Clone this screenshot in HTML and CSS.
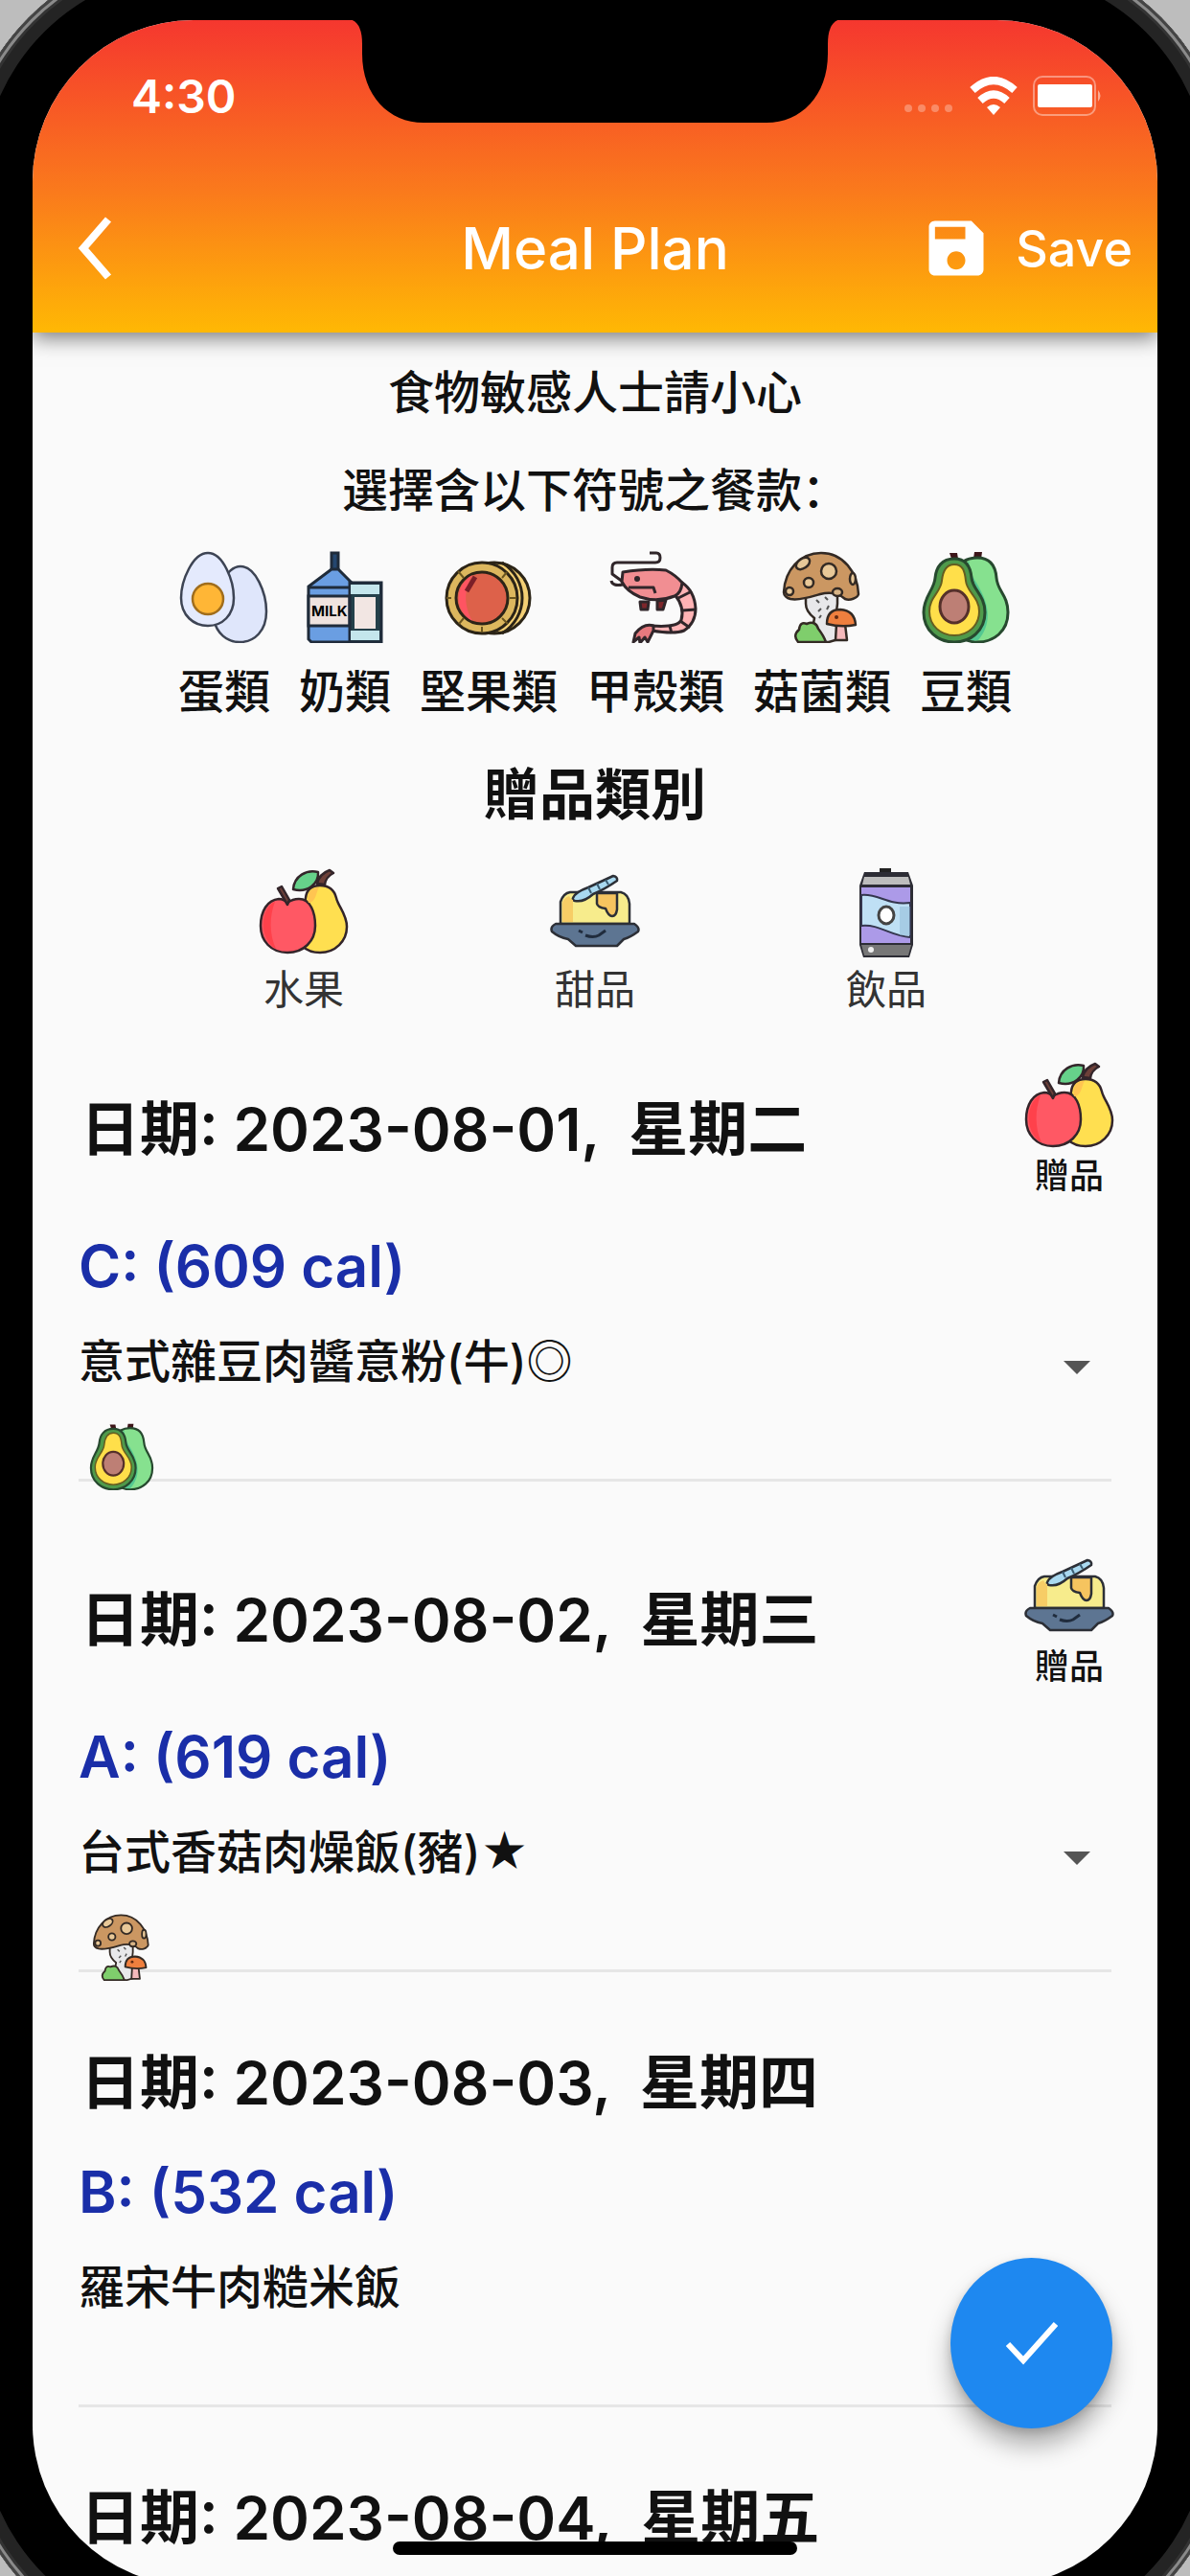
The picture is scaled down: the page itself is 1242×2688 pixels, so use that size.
FILE: index.html
```html
<!DOCTYPE html>
<html lang="zh-Hans">
<head>
    <meta charset="UTF-8">
    <meta name="viewport" content="width=device-width, initial-scale=1.0">
    <title>Meal Plan</title>
    <link rel="stylesheet" href="styles.css">
</head>
<body>

<!-- Food icons, reused with <use> below -->
<svg class="sprite" aria-hidden="true">
    <symbol id="egg" viewBox="0 0 96 96">
        <g stroke="#3d4454" stroke-width="2.5">
            <path fill="#dfe6fb" d="M65 16c16 0 27 28 27 47 0 20-12 32-28 32-13 0-24-9-27-24C36 45 50 16 65 16z"/>
            <path fill="#e4eafd" d="M31 2c16 0 27 29 27 47 0 18-12 29-27 29S3 67 3 49C3 31 15 2 31 2z"/>
            <circle cx="31" cy="50" r="16" fill="#ffb636" stroke="#a06d1c"/>
        </g>
    </symbol>
    <symbol id="nut" viewBox="0 0 96 96">
        <g stroke="#2b2417" stroke-width="3">
            <circle cx="54" cy="49" r="37" fill="#f3cf74"/>
            <path fill="none" d="M62 12c28 18 28 56 0 74"/>
            <circle cx="41" cy="49" r="37" fill="#dcb75e"/>
            <circle cx="41" cy="49" r="27" fill="#dd614a"/>
        </g>
        <path fill="#ff5462" d="M31 25c-18 10-20 37 0 48-10-18-8-35 0-48z"/>
        <path d="M25 42l9-15" stroke="#7b1f28" stroke-width="5"/>
        <path d="M16 21l6 7M9 49H4M17 76l5-6M41 79v6M62 70l6 6M70 49h7M62 28l5-6" stroke="#6b551f" stroke-width="2"/>
    </symbol>
    <symbol id="shrimp" viewBox="0 0 96 96">
        <g fill="none" stroke="#30262a" stroke-width="3" stroke-linejoin="round">
            <path d="M42 2h7q4 0 4 5t-5 5H8q-5 0-5 5v7l11 8M2 31q1 6 12 4"/>
            <path fill="#7d262b" d="M32 53l9 0-1 8h-7zM50 52l9-1-3 10h-6z"/>
            <path fill="#ffb3b5" d="M68 45l8-12q13 9 14 27 0 15-12 23-10 4-34 0v-5q27 2 31-6 4-13-7-27z"/>
            <path d="M70 50l16-8M76 62l14-1M74 73l10 7M63 78l2 8"/>
            <path fill="#f18e92" d="M14 22q25-4 45-2 10 5 17 13-1 11-8 14-18 7-36 1Q18 42 13 32z"/>
            <path d="M20 38h26l2 6"/>
            <path fill="#e7797e" d="M46 78q-10-3-19 8l-2 9 6-5 1 6 5-6 3 5 6-12z"/>
        </g>
        <circle cx="29" cy="29" r="3" fill="#30262a"/>
    </symbol>
    <symbol id="mushroom" viewBox="0 0 96 96">
        <g stroke="#332a24" stroke-width="2.5" stroke-linejoin="round">
            <path fill="#e8e8ea" d="M31 43h33v12q-3 18 1 37l-10 3H42q-6-8-2-25-9-7-9-15z"/>
            <path fill="#cb9762" d="M47 2c23 0 38 20 39 43-1 4-9 7-14 5-8-7-18-7-26-5-10 3-22 7-31 5-4-1-7-4-7-7C9 20 25 2 47 2z"/>
            <circle cx="55" cy="21" r="8" fill="#e8c898"/>
            <circle cx="34" cy="33" r="5" fill="#e8c898"/>
            <ellipse cx="28" cy="13" rx="8" ry="5" fill="#e8c898" transform="rotate(-35 28 13)"/>
            <circle cx="14" cy="42" r="4" fill="#e8c898"/>
            <ellipse cx="64" cy="43" rx="5" ry="4" fill="#d8b486"/>
            <ellipse cx="80" cy="29" rx="3" ry="6" fill="#e8c898"/>
            <path fill="#f5b9bb" d="M63 76h9l2 17H62z"/>
            <path fill="#ef7f3e" d="M53 76q0-15 14-15 15 1 16 16-15 3-30-1z"/>
            <path fill="#7fce6c" d="M23 95q-6-7 1-13 1-9 8-6 9-4 12 5 6 8 8 14z"/>
        </g>
        <path d="M42 51l3 3M51 48l3 3M47 60l-3 3M55 57l-2 4M45 70l2-3" stroke="#555" stroke-width="2"/>
        <circle cx="63" cy="69" r="2" fill="#632a12"/>
    </symbol>
    <symbol id="avocado" viewBox="0 0 96 96">
        <path d="M33 8l-2-6h8l1 6zM56 8l1-7h8l-1 7z" fill="#3d1519"/>
        <g stroke="#27492f" stroke-width="3">
            <path fill="#86e18f" d="M60 7c13 0 19 8 20 21 1 14 12 18 12 36 0 20-15 31-32 31-10 0-20-5-22-12V20c4-8 12-13 22-13z"/>
            <path fill="#54c891" stroke="none" d="M52 10c-3 10 6 20 12 32 10 19 9 37-3 51-8 2-19-3-19-12V20z"/>
            <path fill="#4f9a4b" d="M36 8c12 0 17 9 18 20 1 12 14 18 14 36 0 19-15 31-32 31S4 83 4 64c0-17 11-23 12-36C17 17 23 8 36 8z"/>
        </g>
        <path fill="#ffdf4a" stroke="#655d20" stroke-width="2" d="M36 14c9 0 11 7 12 17 1 12 14 17 14 32 0 15-12 25-26 25S10 78 10 63c0-15 12-20 13-32 1-10 4-17 13-17z"/>
        <ellipse cx="36" cy="58" rx="15" ry="17" fill="#bd7f75" stroke="#55302a" stroke-width="3"/>
    </symbol>
    <symbol id="fruit" viewBox="0 0 96 96">
        <g stroke="#33252a" stroke-width="2.5" stroke-linejoin="round">
            <path fill="#ffdf50" d="M65 20c10 0 15 5 17 13 2 9 11 17 11 30 0 15-12 27-28 27-15 0-25-9-25-24 0-14 9-22 10-33 1-9 6-13 15-13z"/>
            <path fill="#ff5864" d="M31 38c4-3 8-4 12-4 12 0 17 14 17 28 0 16-12 28-29 28S3 78 3 62c0-15 7-27 19-28 4 0 7 2 9 4z"/>
            <path fill="#66d18a" d="M37 24C38 10 51 3 63 6c1 12-11 22-26 18z"/>
            <path fill="#6d4039" d="M21 23l4-2 8 14-2 5zM62 18q2-10 13-14l4 3q-8 4-9 12z"/>
        </g>
        <path fill="#ff414b" d="M18 37C2 44 1 76 19 86c-7-15-7-34-1-49z"/>
        <path fill="#ffc551" d="M64 22c-12 0-12 10-11 16 8 0 8-12 11-16z"/>
    </symbol>
    <symbol id="cake" viewBox="0 0 96 96">
        <g stroke="#2c2f36" stroke-width="2.5" stroke-linejoin="round">
            <path fill="#f7ec8c" d="M12 60V37q3-9 10-10h53q8 2 9 12v21z"/>
            <path fill="#5d7592" d="M7 60h82q6 4 4 8-8 6-15 8l-7 7H28l-8-7Q10 74 3 68q-2-5 4-8z"/>
            <path fill="#f6c45f" d="M50 28h21v17q-1 7-5 7t-7-8q-8-1-9-5z"/>
            <path fill="#a9d9f0" d="M25 33q2-6 16-11l26-12q5 1 4 5-13 9-25 14-10 9-19 7-3-1-2-3z"/>
        </g>
        <path fill="#f7cd66" d="M14 58V38q1-5 7-7 1 3 4 4v23z"/>
        <path d="M41 22l3 6M50 18l3 6M59 14l3 5" stroke="#3b5d73" stroke-width="2"/>
        <path d="M31 67l4 2M38 72q8 3 14 0l7-5" stroke="#202c3d" stroke-width="3" fill="none"/>
    </symbol>
    <symbol id="can" viewBox="0 0 96 96">
        <path d="M41 2h12v5H41z" fill="#222"/>
        <path d="M25 6h46l5 14v62l-4 13H24l-4-13V20z" fill="#2d2d35"/>
        <path d="M25 11h46l2 8H23z" fill="#bdbdbd"/>
        <path d="M22 22h51v58H22z" fill="#ac9ae8"/>
        <path d="M22 30c18-2 27 11 51 8v36c-20-1-32-14-51-12z" fill="#bfe0f5" stroke="#34364e" stroke-width="2"/>
        <ellipse cx="48" cy="51" rx="8" ry="9" fill="#fff" stroke="#444" stroke-width="3"/>
        <path d="M62 42h11v30H62z" fill="#8eb7d6" opacity=".5"/>
        <path d="M22 82h52l-3 11H25z" fill="#777"/>
        <circle cx="32" cy="87" r="3" fill="#eee"/>
    </symbol>
</svg>

<div class="device">
    <div class="screen">

        <svg class="notch" viewBox="0 0 514 108" aria-hidden="true">
            <path d="M0 0h514q-14 2-14 26v10c0 44-28 72-64 72H78c-36 0-64-28-64-72V26Q14 2 0 0z"/>
        </svg>

        <header class="app-bar">
            <div class="status-bar">
                <span class="clock">4:30</span>
                <div class="status-icons">
                    <svg width="54" height="10" viewBox="0 0 54 10" class="signal">
                        <circle cx="6" cy="5" r="4"/><circle cx="20" cy="5" r="4"/><circle cx="34" cy="5" r="4"/><circle cx="48" cy="5" r="4"/>
                    </svg>
                    <svg width="50" height="40" viewBox="0 0 50 40">
                        <g fill="none" stroke="#fff" stroke-width="8">
                            <path d="M3 14q22-20 44 0"/>
                            <path d="M11 25q14-13 28 0"/>
                        </g>
                        <path fill="#fff" d="M18 32q7-6 14 0l-7 8z"/>
                    </svg>
                    <svg width="72" height="42" viewBox="0 0 72 42">
                        <rect x="1" y="1" width="64" height="40" rx="9" fill="none" stroke="#fff" stroke-opacity=".4" stroke-width="2"/>
                        <rect x="5" y="9" width="57" height="24" rx="2" fill="#fff"/>
                        <path d="M68 15q5 6 0 12z" fill="#fff" fill-opacity=".5"/>
                    </svg>
                </div>
            </div>
            <div class="toolbar">
                <button type="button" class="back" aria-label="Back">
                    <svg width="40" height="68" viewBox="0 0 40 68">
                        <path d="M35 4L9 34l26 30" fill="none" stroke="#fff" stroke-width="8"/>
                    </svg>
                </button>
                <h1>Meal Plan</h1>
                <button type="button" class="save">
                    <svg width="76" height="76" viewBox="0 0 24 24">
                        <path fill="#fff" d="M17 3H5c-1.110 0-2 .9-2 2v14c0 1.100.89 2 2 2h14c1.100 0 2-.9 2-2V7l-4-4zm-5 16c-1.660 0-3-1.340-3-3s1.340-3 3-3 3 1.340 3 3-1.340 3-3 3zm3-10H5V5h10v4z"/>
                    </svg>
                    Save
                </button>
            </div>
        </header>

        <main>
            <section class="legend">
                <p class="notice">食物敏感人士請小心<br>選擇含以下符號之餐款：</p>
                <ul class="allergens">
                    <li><svg class="icon"><use href="#egg"/></svg>蛋類</li>
                    <li>
                        <svg class="icon" viewBox="0 0 96 96">
                            <g stroke="#1f2b3a" stroke-width="3">
                                <path fill="#24466f" d="M34 2h7v18h-7z"/>
                                <path fill="#6a9ee2" d="M34 19h7l15 15v61H13l-3-3V37z"/>
                                <path fill="#efe3df" d="M10 47h43v31H10z"/>
                                <path d="M10 38h43"/>
                                <path fill="#24404a" d="M53 33h33v62H53z"/>
                                <path fill="#c4e6ec" stroke="none" d="M54 35h30v10H54zM54 83h30v10H54z"/>
                                <path fill="#f2e6e3" stroke="none" d="M58 48h22v33H58z"/>
                            </g>
                            <text x="13" y="68" class="milk-text">MILK</text>
                        </svg>
                        奶類
                    </li>
                    <li><svg class="icon"><use href="#nut"/></svg>堅果類</li>
                    <li><svg class="icon"><use href="#shrimp"/></svg>甲殼類</li>
                    <li><svg class="icon"><use href="#mushroom"/></svg>菇菌類</li>
                    <li><svg class="icon"><use href="#avocado"/></svg>豆類</li>
                </ul>
                <h2>贈品類別</h2>
                <ul class="gifts">
                    <li><svg class="icon"><use href="#fruit"/></svg>水果</li>
                    <li><svg class="icon"><use href="#cake"/></svg>甜品</li>
                    <li><svg class="icon"><use href="#can"/></svg>飲品</li>
                </ul>
            </section>

            <section class="days">
                <article class="day">
                    <div class="day-head">
                        <h3>日期: 2023-08-01,  星期二</h3>
                        <div class="gift"><svg class="icon"><use href="#fruit"/></svg>贈品</div>
                    </div>
                    <label class="cal" for="meal1">C: (609 cal)</label>
                    <div class="meal">
                        <select id="meal1" name="meal1">
                            <option>意式雜豆肉醬意粉(牛)◎</option>
                        </select>
                        <svg class="arrow" width="28" height="14" viewBox="0 0 28 14"><path d="M0 0h28L14 14z"/></svg>
                    </div>
                    <div class="tags"><svg class="icon-small"><use href="#avocado"/></svg></div>
                </article>

                <article class="day">
                    <div class="day-head">
                        <h3>日期: 2023-08-02,  星期三</h3>
                        <div class="gift"><svg class="icon"><use href="#cake"/></svg>贈品</div>
                    </div>
                    <label class="cal" for="meal2">A: (619 cal)</label>
                    <div class="meal">
                        <select id="meal2" name="meal2">
                            <option>台式香菇肉燥飯(豬)★</option>
                        </select>
                        <svg class="arrow" width="28" height="14" viewBox="0 0 28 14"><path d="M0 0h28L14 14z"/></svg>
                    </div>
                    <div class="tags"><svg class="icon-small"><use href="#mushroom"/></svg></div>
                </article>

                <article class="day">
                    <div class="day-head">
                        <h3>日期: 2023-08-03,  星期四</h3>
                    </div>
                    <p class="cal">B: (532 cal)</p>
                    <p class="meal">羅宋牛肉糙米飯</p>
                    <div class="tags"></div>
                </article>

                <article class="day">
                    <div class="day-head">
                        <h3>日期: 2023-08-04,  星期五</h3>
                    </div>
                </article>
            </section>
        </main>

        <button type="button" class="fab" aria-label="Confirm">
            <svg width="60" height="54" viewBox="0 0 60 54">
                <path d="M5 28l16 17L55 7" fill="none" stroke="#fff" stroke-width="6"/>
            </svg>
        </button>
        <div class="home-indicator"></div>
    </div>
</div>

</body>
</html>
```
FILE: styles.css
```css
* {
    box-sizing: border-box;
}
body {
    margin: 0;
    height: 100vh;
    overflow: hidden;
    background-color: #bdbdbd;
    font-family: Inter, "Noto Sans CJK SC", sans-serif;
    color: #111;
}
h1, h2, h3, p, ul {
    margin: 0;
    padding: 0;
}
ul {
    list-style: none;
}
button {
    border: none;
    padding: 0;
    background: none;
    font-family: inherit;
    color: #fff;
    cursor: pointer;
}
.sprite {
    position: absolute;
    width: 0;
    height: 0;
}
.milk-text {
    font-size: 15px;
    font-weight: 700;
}

/* phone frame, runs past the window edges */
.device {
    height: calc(100vh + 138px);
    margin: -53px -41px;
    padding: 74px 75px 75px;
    border-radius: 243px;
    background-color: #000;
    box-shadow: inset 0 0 0 3px #444, inset 0 0 0 6px #8a8a8a, inset 0 0 0 9px #333, inset 0 0 0 22px #242424;
}
.screen {
    position: relative;
    height: 100%;
    overflow: hidden;
    border-radius: 168px;
    background-color: #fafafa;
}
.notch {
    position: absolute;
    top: -1px;
    left: 50%;
    width: 514px;
    margin-left: -257px;
    z-index: 2;
}

/* app bar */
.app-bar {
    position: relative;
    padding-bottom: 8px;
    background: linear-gradient(#f5372f, #fa7a1c 55%, #ffb804);
    box-shadow: 0 6px 20px rgba(0, 0, 0, 0.5);
    color: #fff;
}
.status-bar {
    display: flex;
    justify-content: space-between;
    align-items: center;
    height: 158px;
    padding: 0 58px 0 103px;
}
.clock {
    font-size: 48px;
    font-weight: 600;
}
.status-icons {
    display: flex;
    align-items: center;
    gap: 16px;
}
.signal {
    margin-top: 26px;
    fill: #fff;
    fill-opacity: 0.3;
}
.toolbar {
    display: grid;
    grid-template-columns: 1fr auto 1fr;
    align-items: center;
    height: 160px;
    padding: 0 26px;
}
.toolbar h1 {
    font-size: 60px;
    font-weight: 500;
}
.back {
    justify-self: start;
    display: flex;
    padding-left: 18px;
}
.save {
    justify-self: end;
    display: flex;
    align-items: center;
    gap: 24px;
    font-size: 52px;
    font-weight: 500;
}

/* allergen and gift legend */
.legend {
    padding-top: 12px;
    text-align: center;
}
.icon {
    display: block;
    width: 96px;
    height: 96px;
}
.notice {
    font-size: 48px;
    font-weight: 500;
    line-height: 102px;
}
.allergens {
    display: flex;
    justify-content: center;
    gap: 30px;
    margin-top: 12px;
    font-size: 48px;
    font-weight: 500;
    line-height: 70px;
}
.allergens li {
    display: flex;
    flex-direction: column;
    align-items: center;
    gap: 16px;
}
.legend h2 {
    margin-top: 32px;
    font-size: 58px;
    font-weight: 600;
    line-height: 80px;
}
.gifts {
    display: flex;
    justify-content: space-evenly;
    margin-top: 35px;
    padding: 0 27px;
    font-size: 42px;
    line-height: 60px;
    color: #333;
}
.gifts .icon {
    margin-bottom: 3px;
}

/* one block per day */
.days {
    padding: 0 48px;
}
.day {
    padding-top: 72px;
    border-bottom: 3px solid #e6e6e6;
}
.day:first-child {
    padding-top: 43px;
}
.day:last-child {
    border-bottom: none;
}
.day-head {
    display: flex;
    justify-content: space-between;
    align-items: center;
    min-height: 88px;
    padding-left: 2px;
}
.day-head h3 {
    font-size: 62px;
    font-weight: 600;
    line-height: 88px;
    white-space: pre;
}
.gift {
    display: flex;
    flex-direction: column;
    align-items: center;
    margin-right: -4px;
    font-size: 36px;
    font-weight: 500;
    line-height: 50px;
}
.cal {
    display: block;
    margin-top: 34px;
    font-size: 60px;
    font-weight: 600;
    line-height: 70px;
    color: #1a2ea8;
}
.meal {
    position: relative;
    margin-top: 30px;
    font-size: 48px;
    font-weight: 500;
    line-height: 70px;
}
.meal select {
    display: block;
    width: 100%;
    height: 70px;
    padding: 0;
    border: none;
    background: none;
    appearance: none;
    font: inherit;
    color: inherit;
}
.arrow {
    position: absolute;
    top: 34px;
    right: 22px;
    fill: #555;
    pointer-events: none;
}
/* icons hang over the divider */
.tags {
    height: 58px;
    margin-top: 29px;
    padding-left: 10px;
}
.icon-small {
    position: relative;
    display: block;
    width: 70px;
    height: 70px;
}

.fab {
    position: absolute;
    right: 47px;
    bottom: 164px;
    display: flex;
    justify-content: center;
    align-items: center;
    width: 169px;
    height: 178px;
    border-radius: 50%;
    background-color: #1e88f0;
    box-shadow: 0 18px 26px rgba(0, 0, 0, 0.3), 0 4px 10px rgba(0, 0, 0, 0.15);
}
.home-indicator {
    position: absolute;
    bottom: 32px;
    left: 32%;
    right: 32%;
    height: 14px;
    border-radius: 7px;
    background-color: #000;
}
```
